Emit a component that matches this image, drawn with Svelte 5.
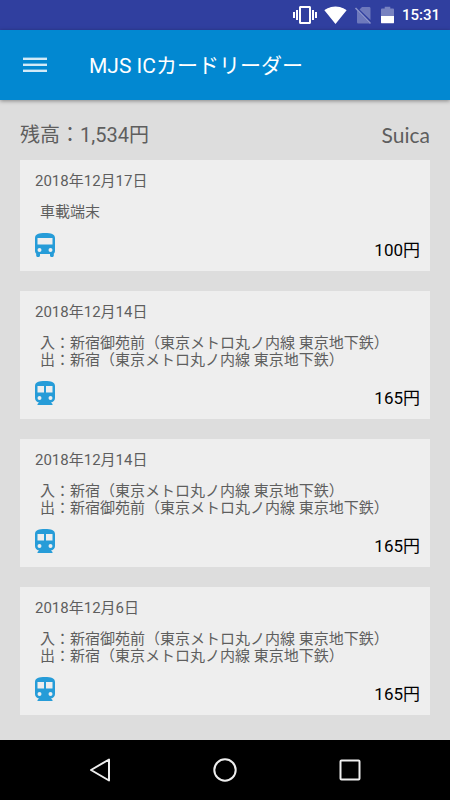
<script lang="ts">
	interface Trip {
		date: string;
		kind: 'bus' | 'train';
		details: string[];
		fare: number;
	}

	const balance = 1534;
	const cardName = 'Suica';

	const trips: Trip[] = [
		{
			date: '2018年12月17日',
			kind: 'bus',
			details: ['車載端末'],
			fare: 100
		},
		{
			date: '2018年12月14日',
			kind: 'train',
			details: [
				'入：新宿御苑前（東京メトロ丸ノ内線 東京地下鉄）',
				'出：新宿（東京メトロ丸ノ内線 東京地下鉄）'
			],
			fare: 165
		},
		{
			date: '2018年12月14日',
			kind: 'train',
			details: [
				'入：新宿（東京メトロ丸ノ内線 東京地下鉄）',
				'出：新宿御苑前（東京メトロ丸ノ内線 東京地下鉄）'
			],
			fare: 165
		},
		{
			date: '2018年12月6日',
			kind: 'train',
			details: [
				'入：新宿御苑前（東京メトロ丸ノ内線 東京地下鉄）',
				'出：新宿（東京メトロ丸ノ内線 東京地下鉄）'
			],
			fare: 165
		}
	];
</script>

<div class="app" lang="ja">
	<div class="status-bar">
		<svg class="vibrate" viewBox="0 0 24 24" fill="#fff">
			<path d="M0 15h2V9H0v6zm3 2h2V7H3v10zm19-8v6h2V9h-2zm-3 8h2V7h-2v10zM16.5 3h-9C6.67 3 6 3.67 6 4.5v15c0 .83.67 1.5 1.5 1.5h9c.83 0 1.5-.67 1.5-1.5v-15c0-.83-.67-1.5-1.5-1.5zM16 19H8V5h8v14z" />
		</svg>
		<svg class="wifi" viewBox="0 0 24 20" fill="#fff">
			<path d="M12 19.5 23.6 5C23.2 4.7 18.8 1 12 1S.8 4.7.4 5L12 19.5z" />
		</svg>
		<svg class="sim" viewBox="0 0 18 20">
			<path d="M8 2h7c1 0 1.5.5 1.5 1.5V15L5.500 4.500zM3 5.500 15.500 18.500H4.500c-1 0-1.500-.5-1.500-1.500z" fill="#fff" opacity=".3" />
			<path d="M1.500 3 16.500 18.500" stroke="#8c95cb" stroke-width="1.500" />
		</svg>
		<svg class="battery" viewBox="0 0 14 20">
			<path d="M4 1h6v2h3c.6 0 1 .4 1 1v7H0V4c0-.6.4-1 1-1h3z" fill="#fff" opacity=".35" />
			<path d="M0 11h14v7c0 .6-.4 1-1 1H1c-.6 0-1-.4-1-1z" fill="#fff" />
		</svg>
		<span class="clock">15:31</span>
	</div>

	<header class="toolbar">
		<button class="menu-btn" aria-label="メニュー">
			<svg viewBox="0 0 24 18" fill="currentColor">
				<path d="M0 2h24v2H0zM0 8h24v2H0zM0 14h24v2H0z" />
				<path d="M0 1h24v3H0zM0 7h24v3H0zM0 13h24v3H0z" opacity=".4" />
			</svg>
		</button>
		<h1>MJS ICカードリーダー</h1>
	</header>

	<main>
		<div class="summary">
			<span class="balance">残高：{balance.toLocaleString('en-US')}円</span>
			<span class="card-name">{cardName}</span>
		</div>

		<ul class="trips">
			{#each trips as trip}
				<li class="trip">
					<div class="date">{trip.date}</div>
					<div class="details">
						{#each trip.details as line}
							<div>{line}</div>
						{/each}
					</div>
					<div class="trip-footer">
						{#if trip.kind === 'bus'}
							<svg class="kind" viewBox="0 0 20 24" fill="currentColor">
								<path fill-rule="evenodd" d="M0 5C0 1 4 0 10 0s10 1 10 5v13c0 1-.4 2-1.200 2.700V22.500c0 .8-.6 1.500-1.400 1.500h-1c-.8 0-1.400-.7-1.400-1.500V21H5v1.500C5 23.300 4.400 24 3.600 24h-1c-.8 0-1.400-.7-1.400-1.500v-1.800C.4 20 0 19 0 18zM2.500 5v6.500h15V5zM4.500 15a2 2 0 1 0 0 4 2 2 0 0 0 0-4zm11 0a2 2 0 1 0 0 4 2 2 0 0 0 0-4z" />
							</svg>
						{:else}
							<svg class="kind" viewBox="0 0 20 24" fill="currentColor">
								<path fill-rule="evenodd" d="M0 5C0 1 4 0 10 0s10 1 10 5v12c0 2.500-1.800 4.300-4 4.500l1.500 1.500v1h-15v-1L4 21.500c-2.200-.2-4-2-4-4.500zM2.500 5v6.500H9V5zM11 5v6.500h6.500V5zM4.500 15a2 2 0 1 0 0 4 2 2 0 0 0 0-4zm11 0a2 2 0 1 0 0 4 2 2 0 0 0 0-4z" />
							</svg>
						{/if}
						<span class="fare">{trip.fare}円</span>
					</div>
				</li>
			{/each}
		</ul>
	</main>

	<nav class="nav-bar">
		<button aria-label="戻る">
			<svg viewBox="0 0 26 26">
				<path d="M22 2.500v21L4 13z" />
			</svg>
		</button>
		<button aria-label="ホーム">
			<svg viewBox="0 0 26 26">
				<circle cx="13" cy="13" r="10.700" />
			</svg>
		</button>
		<button aria-label="履歴">
			<svg viewBox="0 0 26 26">
				<rect x="3.500" y="3.500" width="19" height="19" rx="1" />
			</svg>
		</button>
	</nav>
</div>

<style>
	:global(body) {
		background: #ddd;
	}

	.app {
		display: flex;
		flex-direction: column;
		min-height: 100vh;
		font-family: Roboto, 'Noto Sans CJK JP', sans-serif;
		color: #5e5e5e;
		background: #ddd;
	}

	button {
		padding: 0;
		border: none;
		background: none;
		cursor: pointer;
	}

	svg {
		display: block;
	}

	.status-bar {
		display: flex;
		align-items: center;
		justify-content: flex-end;
		height: 30px;
		padding-right: 10px;
		background: #303f9f;
		color: #fff;
	}

	.vibrate {
		width: 24px;
		height: 24px;
		margin-right: 7px;
	}

	.wifi {
		width: 23px;
		height: 20px;
		margin-right: 7px;
	}

	.sim {
		width: 18px;
		height: 20px;
		margin-right: 9px;
	}

	.battery {
		width: 13px;
		height: 20px;
		margin-right: 8px;
	}

	.clock {
		font-size: 15px;
		font-weight: 500;
		line-height: 22px;
	}

	.toolbar {
		display: flex;
		align-items: center;
		height: 70px;
		padding: 0 20px;
		background: #0288d1;
		color: #fff;
		box-shadow: 0 1px 4px rgba(0, 0, 0, 0.4);
	}

	.menu-btn {
		width: 30px;
		height: 30px;
		margin-right: 39px;
		display: flex;
		align-items: center;
		justify-content: center;
		color: #d2eaf7;
	}

	.menu-btn svg {
		width: 24px;
		height: 18px;
	}

	h1 {
		margin: 0;
		padding-top: 2px;
		font-size: 21px;
		font-weight: 400;
		line-height: 30px;
	}

	main {
		flex: 1;
		padding: 20px;
	}

	.summary {
		display: flex;
		align-items: center;
		justify-content: space-between;
		height: 30px;
		margin-bottom: 10px;
		font-size: 20px;
		line-height: 30px;
	}

	.card-name {
		font-family: Lato, sans-serif;
		font-size: 21px;
	}

	.trips {
		display: flex;
		flex-direction: column;
		gap: 20px;
		margin: 0;
		padding: 0;
		list-style: none;
	}

	.trip {
		padding: 10px 10px 10px 15px;
		background: #eee;
		font-size: 15px;
	}

	.date {
		line-height: 22px;
	}

	.details {
		margin: 12px 0 9px 5px;
		line-height: 17px;
	}

	.trip-footer {
		display: flex;
		align-items: flex-start;
		justify-content: space-between;
		height: 31px;
	}

	.kind {
		width: 20px;
		height: 24px;
		margin-top: 3px;
		color: #269cd8;
	}

	.fare {
		align-self: flex-end;
		font-size: 17px;
		line-height: 22px;
		color: #000;
	}

	.nav-bar {
		display: flex;
		align-items: center;
		justify-content: center;
		gap: 75px;
		height: 60px;
		background: #000;
	}

	.nav-bar button {
		width: 50px;
		height: 50px;
		display: flex;
		align-items: center;
		justify-content: center;
	}

	.nav-bar svg {
		width: 26px;
		height: 26px;
		fill: none;
		stroke: #eee;
		stroke-width: 2;
		stroke-linejoin: round;
	}
</style>
